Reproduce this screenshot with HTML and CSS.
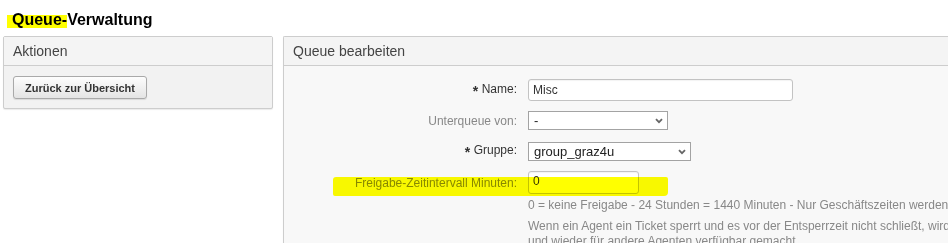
FILE: index.html
```html
<!DOCTYPE html>
<html lang="de">
<head>
    <meta charset="UTF-8">
    <title>Queue-Verwaltung</title>
    <link rel="stylesheet" href="styles.css">
</head>
<body>
    <h1 class="page-title"><span class="highlight">Queue-</span>Verwaltung</h1>

    <div class="layout">
        <div class="widget sidebar">
            <div class="widget-header">Aktionen</div>
            <div class="widget-body">
                <button class="back-button">Zurück zur Übersicht</button>
            </div>
        </div>

        <div class="widget main">
            <div class="widget-header">Queue bearbeiten</div>
            <div class="widget-body">
                <div class="field-row first">
                    <label class="field-label mandatory"><span class="marker-star">*</span> Name:</label>
                    <input class="text-input name-input" type="text" value="Misc">
                </div>
                <div class="field-row">
                    <label class="field-label">Unterqueue von:</label>
                    <div class="select-box parent-select">
                        <span>-</span>
                        <svg width="8" height="6" viewBox="0 0 8 6"><path d="M1 1.2 L4 4.2 L7 1.2" fill="none" stroke="#666" stroke-width="1.8"/></svg>
                    </div>
                </div>
                <div class="field-row">
                    <label class="field-label mandatory"><span class="marker-star">*</span> Gruppe:</label>
                    <div class="select-box group-select">
                        <span>group_graz4u</span>
                        <svg width="8" height="6" viewBox="0 0 8 6"><path d="M1 1.2 L4 4.2 L7 1.2" fill="none" stroke="#666" stroke-width="1.8"/></svg>
                    </div>
                </div>
                <div class="field-row">
                    <label class="field-label">Freigabe-Zeitintervall Minuten:</label>
                    <input class="text-input minutes-input" type="text" value="0">
                    <span class="pen-mark"></span>
                </div>
                <div class="field-help">
                    <p>0 = keine Freigabe - 24 Stunden = 1440 Minuten - Nur Geschäftszeiten werden berücksichtigt.</p>
                    <p>Wenn ein Agent ein Ticket sperrt und es vor der Entsperrzeit nicht schließt, wird das Ticket automatisch entsperrt<br>und wieder für andere Agenten verfügbar gemacht.</p>
                </div>
            </div>
        </div>
    </div>
</body>
</html>
```

FILE: styles.css
```css
html, body {
    margin: 0;
    padding: 0;
    background: #fff;
    overflow: hidden;
    font-family: "Liberation Sans", Arial, sans-serif;
    color: #333;
}

.page-title {
    margin: 0;
    padding: 10px 0 6px 12px;
    font-size: 16px;
    line-height: 20px;
    font-weight: 700;
    color: #000;
}

.highlight {
    margin-left: -5px;
    padding-left: 5px;
    background: linear-gradient(to bottom, transparent 25%, #ffff00 25%, #ffff00 100%);
}

.layout {
    display: grid;
    grid-template-columns: 270px 720px;
    column-gap: 10px;
    padding-left: 3px;
    align-items: start;
}

.widget {
    box-sizing: border-box;
    border: 1px solid #cdcdcd;
    border-radius: 2px;
    background: #f2f2f2;
    box-shadow: 0 1px 1px rgba(0,0,0,0.08);
}

.widget-header {
    height: 28px;
    line-height: 28px;
    padding-left: 9px;
    font-size: 14px;
    color: #444;
    background: #f4f4f4;
    border-bottom: 1px solid #cdcdcd;
}

.sidebar .widget-body {
    padding: 10px 9px 9px;
}

.back-button {
    display: block;
    box-sizing: border-box;
    width: 134px;
    height: 23px;
    padding: 0;
    font-family: "Liberation Sans", Arial, sans-serif;
    font-size: 11px;
    font-weight: 700;
    color: #333;
    background: linear-gradient(#fdfdfd, #e4e4e4);
    border: 1px solid #a9a9a9;
    border-radius: 3px;
    box-shadow: 0 1px 1px rgba(0,0,0,0.1);
}

.main {
    background: #f8f8f8;
    height: 260px;
    border-right: none;
}

.main .widget-body {
    padding-top: 9px;
}

.field-row {
    position: relative;
    display: grid;
    grid-template-columns: 233px auto;
    column-gap: 11px;
    align-items: center;
    justify-items: start;
    height: 31px;
    font-size: 12px;
}

.field-row.first {
    height: 30px;
}

.field-label {
    justify-self: end;
    color: #888;
}

.field-label.mandatory {
    color: #333;
}

.marker-star {
    font-size: 14px;
    font-weight: 700;
    vertical-align: -3px;
}

.text-input {
    box-sizing: border-box;
    margin: 0;
    padding: 0 4px;
    font-family: "Liberation Sans", Arial, sans-serif;
    font-size: 12px;
    color: #333;
    background: #fff;
    border: 1px solid #c3c3c3;
    border-radius: 3px;
    box-shadow: inset 0 1px 1px rgba(0,0,0,0.05);
}

.name-input {
    width: 265px;
    height: 22px;
}

.minutes-input {
    width: 111px;
    height: 23px;
    padding-bottom: 4px;
}

.select-box {
    box-sizing: border-box;
    display: flex;
    align-items: center;
    justify-content: space-between;
    height: 19px;
    padding: 0 4px 0 5px;
    font-size: 13px;
    color: #222;
    background: #fff;
    border: 1px solid #a3a3a3;
}

.parent-select {
    width: 140px;
}

.group-select {
    width: 163px;
}

.pen-mark {
    position: absolute;
    left: 49px;
    top: 10px;
    width: 335px;
    height: 19px;
    background: #ffff00;
    border-radius: 3px 2px 4px 2px;
    mix-blend-mode: multiply;
}

.field-help {
    padding-left: 244px;
    font-size: 12px;
    line-height: 15px;
    color: #888;
    white-space: nowrap;
}

.field-help p {
    margin: 0 0 6px;
}
```
